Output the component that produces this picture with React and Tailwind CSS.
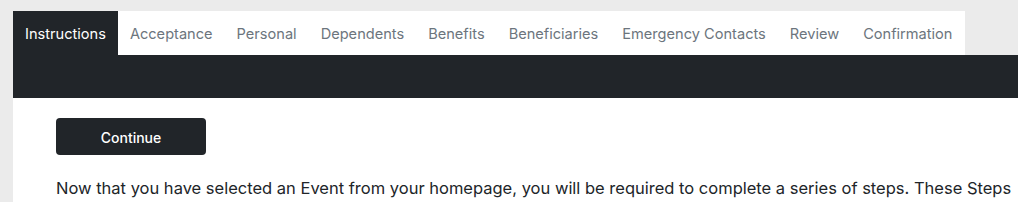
export default function App() {
  const tabs = [
    "Instructions",
    "Acceptance",
    "Personal",
    "Dependents",
    "Benefits",
    "Beneficiaries",
    "Emergency Contacts",
    "Review",
    "Confirmation",
  ];
  return (
    <div
      className="w-[1018px] h-[202px] overflow-hidden bg-[#ebebeb] pt-[11px] pl-[13px]"
      style={{ fontFamily: "Inter, 'Noto Sans', sans-serif" }}
    >
      <div className="w-[1300px]">
        <div className="flex w-fit bg-white h-[44px]">
          {tabs.map((t, i) => (
            <div
              key={t}
              className={
                i === 0
                  ? "flex items-center px-[12px] pt-[3px] text-[14.6px] bg-[#212529] text-white"
                  : "flex items-center px-[12px] pt-[3px] text-[14.6px] text-[#6c757d]"
              }
            >
              {t}
            </div>
          ))}
        </div>
        <div className="h-[43px] bg-[#212529]" />
        <div className="bg-white pl-[43px] pt-[20px] pb-[40px]">
          <button className="w-[150px] h-[37px] pt-[2px] rounded-[4px] bg-[#212529] text-white text-[14px] font-medium">
            Continue
          </button>
          <p className="mt-[21px] text-[16.5px] leading-[24px] text-[#212529] whitespace-nowrap">
            Now that you have selected an Event from your homepage, you will be required to complete a series of steps. These Steps
          </p>
        </div>
      </div>
    </div>
  );
}
